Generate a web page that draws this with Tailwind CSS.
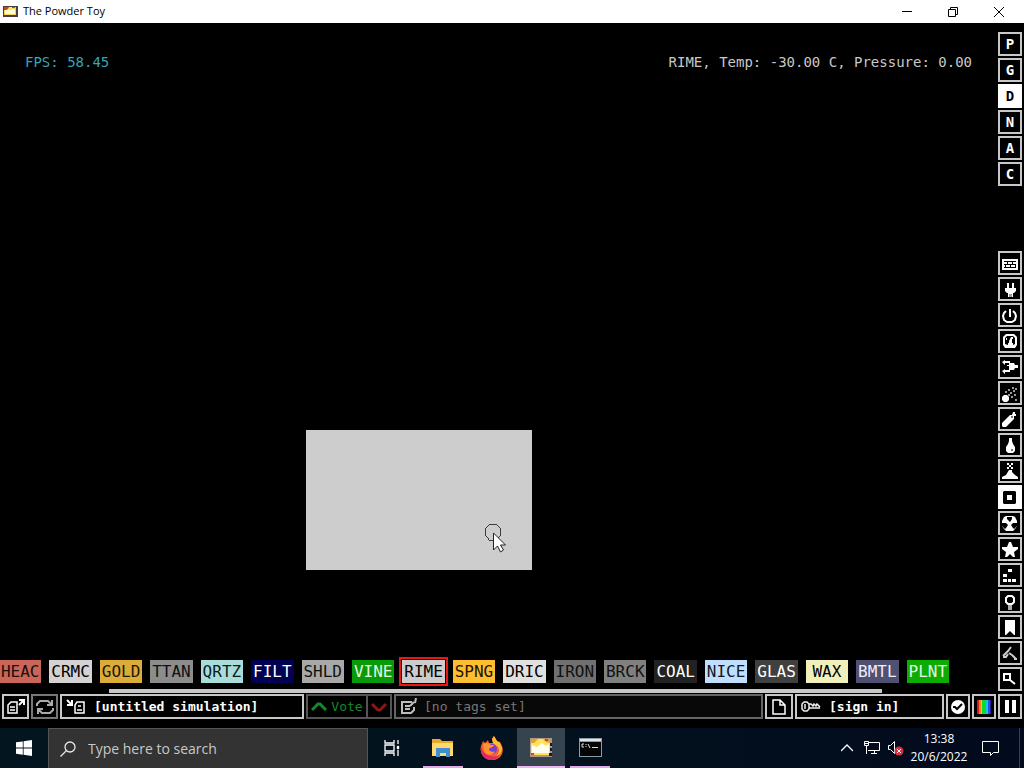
<!DOCTYPE html>
<html lang="en">

<head>
    <meta charset="UTF-8">
    <meta name="viewport" content="width=device-width, initial-scale=1.0">
    <title>The Powder Toy</title>
    <script src="https://cdn.jsdelivr.net/npm/@tailwindcss/browser@4"></script>
</head>

<body class="h-screen flex flex-col overflow-hidden bg-black font-['Open_Sans',sans-serif]">
    <!-- Title bar -->
    <header class="h-[23px] shrink-0 bg-white flex items-center pl-[3px] pr-0.5 text-black">
        <svg class="w-[15px] h-[13px] mr-[5px]" viewBox="0 0 15 13">
            <path fill="#4b3d3d" d="M0 1h15v11H0z" />
            <path fill="#f5d54a" d="M1 2h12v8H1z" />
            <path fill="#fffbe0" d="M2 4h10v5H2z" />
            <path fill="#dd3a22" d="M1 2h5l-2 3H1zM9 2h3v1H9z" />
            <path fill="#ffed42" d="M6 2h3v3H6z" />
        </svg>
        <h1 class="text-[11px] grow">The Powder Toy</h1>
        <button class="w-[46px] h-full grid place-items-center" aria-label="Minimize">
            <svg class="w-3 h-3" viewBox="0 0 12 12" stroke="#000"><path d="M1 5.500h10" /></svg>
        </button>
        <button class="w-[46px] h-full grid place-items-center" aria-label="Restore">
            <svg class="w-3 h-3" viewBox="0 0 12 12" fill="none" stroke="#000"><path d="M1.500 3.500h7v7h-7zM3.500 3V1.500h7v7H9" /></svg>
        </button>
        <button class="w-[46px] h-full grid place-items-center" aria-label="Close">
            <svg class="w-3 h-3" viewBox="0 0 12 12" stroke="#000"><path d="M1 1l10 10M11 1L1 11" /></svg>
        </button>
    </header>

    <main class="grow min-h-0 flex flex-col font-['DejaVu_Sans_Mono',monospace]">
        <div class="grow min-h-0 flex">
            <!-- Simulation -->
            <section class="relative grow min-w-0 flex flex-col pb-px">
                <div class="flex justify-between pl-[25px] pr-[26px] pt-7 text-sm leading-[22px]">
                    <p class="text-[#35a3b8]">FPS: 58.45</p>
                    <p class="text-[#c8c8c8]">RIME, Temp: -30.00 C, Pressure: 0.00</p>
                </div>
                <div class="absolute left-[306px] top-[407px] w-[226px] h-[140px] bg-[#cdcdcd]">
                    <svg class="absolute left-[177px] top-[92px] w-6 h-8" viewBox="0 0 24 32">
                        <path fill="none" stroke="#3c3c3c" d="M6.500 2.500h7l2 2 2 2v7l-2 2-2 3h-7l-2-3-2-2v-7l2-2z" shape-rendering="crispEdges" />
                        <path fill="#fff" stroke="#222" d="M10.500 11v17l4-4 3 6 3-2-3-5h5z" />
                    </svg>
                </div>

                <!-- Element menu -->
                <div id="elements" class="mt-auto -ml-px mr-[49px] grid grid-cols-[repeat(19,minmax(0,1fr))] gap-2"></div>
                <div class="mt-1.5 ml-[109px] mr-[116px] h-1 bg-[#c8c8c8]"></div>
            </section>

            <!-- Side buttons -->
            <aside class="shrink-0 w-[26px] flex flex-col justify-between pt-[9px] pb-[3px]">
                <div id="options" class="flex flex-col gap-0.5"></div>
                <div id="categories" class="flex flex-col gap-0.5"></div>
            </aside>
        </div>

        <!-- Bottom bar -->
        <div class="h-[34px] shrink-0 flex gap-0.5 px-0.5 pb-[9px] text-[13px]">
            <button class="w-[27px] border-2 border-[#c8c8c8] grid place-items-center" aria-label="Open">
                <svg class="w-5 h-[18px]" viewBox="0 0 20 18" fill="none" stroke="#fff" stroke-width="1.500">
                    <path d="M5 4h6v11H2V7zM4 9h5M4 12h5" />
                    <path d="M13 2h5v5M18 2l-5 5" stroke-width="2" />
                </svg>
            </button>
            <button class="w-[27px] border-2 border-[#777] grid place-items-center" aria-label="Reload">
                <svg class="w-5 h-[18px]" viewBox="0 0 20 18" fill="none" stroke="#aaa" stroke-width="2">
                    <path d="M2 8V6l3-3h8l4 4M18 10v2l-3 3H7l-4-4M17 2v5h-5M3 16v-5h5" />
                </svg>
            </button>
            <button class="w-[244px] border-2 border-[#c8c8c8] flex items-center gap-2 pl-1 font-bold text-white text-left">
                <svg class="w-5 h-[18px]" viewBox="0 0 20 18" fill="none" stroke="#fff" stroke-width="1.500">
                    <path d="M11 4h7v11H9V7zM12 8h3M11 12h5" />
                    <path d="M1 2l5 5M6 2v5H1" stroke-width="2" />
                </svg>
                [untitled simulation]
            </button>
            <div class="w-[86px] flex">
                <button class="grow border-2 border-[#555] flex items-center justify-center gap-1 text-[#128a2c]">
                    <svg class="w-4 h-3" viewBox="0 0 16 12" fill="none" stroke="#128a2c" stroke-width="3"><path d="M1 9l6-6h2l6 6" /></svg>
                    Vote
                </button>
                <button class="w-[24px] border-2 border-l-0 border-[#555] grid place-items-center" aria-label="Vote down">
                    <svg class="w-4 h-3" viewBox="0 0 16 12" fill="none" stroke="#8f1512" stroke-width="3"><path d="M1 3l6 6h2l6-6" /></svg>
                </button>
            </div>
            <button class="grow border-2 border-[#666] bg-[#080808] flex items-center gap-1.5 pl-1 text-[#777] text-left">
                <svg class="w-[18px] h-[18px]" viewBox="0 0 18 18" fill="none" stroke="#bdbdbd" stroke-width="2">
                    <path d="M12 4H2v11h9l3-3V9M5 8h5M5 11h5" />
                    <path d="M10 8l4-4M16 0l-1 5" />
                </svg>
                [no tags set]
            </button>
            <button class="w-7 border-2 border-[#c8c8c8] grid place-items-center" aria-label="New simulation">
                <svg class="w-4 h-[18px]" viewBox="0 0 16 18" fill="none" stroke="#fff" stroke-width="1.500"><path d="M2 2h7l5 5v9H2zM9 2v5h5" /></svg>
            </button>
            <button class="w-[149px] border-2 border-[#c8c8c8] flex items-center gap-2 pl-1 font-bold text-white text-left">
                <svg class="w-5 h-3" viewBox="0 0 20 12" fill="none" stroke="#eee" stroke-width="1.500">
                    <path d="M3 1h3l2 2v5l-2 2H3L1 8V3zM4 3v5M8 3h2l2 2 1-2 2 2 1-2 3 3M8 7h11" />
                </svg>
                [sign in]
            </button>
            <button class="w-6 border-2 border-[#c8c8c8] grid place-items-center" aria-label="Simulation options">
                <svg class="w-4 h-4" viewBox="0 0 16 16"><circle cx="8" cy="8" r="7" fill="#fff" /><path d="M3 8h2l2 2 5-5" fill="none" stroke="#000" stroke-width="2" /></svg>
            </button>
            <button class="w-6 border-2 border-[#c8c8c8] grid place-items-center" aria-label="Renderer options">
                <svg class="w-4 h-4" viewBox="0 0 16 16">
                    <path fill="#e01818" d="M1 1h2v14H1z" /><path fill="#f08a10" d="M3 1h2v14H3z" />
                    <path fill="#c8e020" d="M5 1h1v14H5z" /><path fill="#10d830" d="M6 1h4v14H6z" />
                    <path fill="#10c8d8" d="M10 1h2v14h-2z" /><path fill="#1858f0" d="M12 1h2v14h-2z" /><path fill="#301890" d="M14 1h1v14h-1z" />
                </svg>
            </button>
            <button class="w-6 border-2 border-[#c8c8c8] flex items-center justify-center gap-[3px]" aria-label="Pause">
                <span class="w-1 h-[13px] bg-white"></span>
                <span class="w-1 h-[13px] bg-white"></span>
            </button>
        </div>
    </main>

    <!-- Taskbar -->
    <footer class="h-10 shrink-0 flex bg-linear-to-r from-[#031620] via-[#02121e] to-[#020a1d] text-white">
        <button class="w-12 grid place-items-center" aria-label="Start">
            <svg class="w-4 h-4" viewBox="0 0 16 16" fill="#fff"><path d="M0 2.300L6.800 1.400v6.200H0zM7.600 1.300L16 0v7.600H7.600zM0 8.400h6.800v6.300L0 13.700zM7.600 8.400H16V16l-8.400-1.200z" /></svg>
        </button>
        <label class="w-80 flex items-center gap-3 pl-[11px] bg-[#333] border border-[#555] border-b-0">
            <svg class="w-4 h-4" viewBox="0 0 16 16" fill="none" stroke="#e8e8e8" stroke-width="1.300"><circle cx="10" cy="6" r="5" /><path d="M6.500 9.500L.5 15.500" /></svg>
            <input type="text" aria-label="Search" placeholder="Type here to search" class="grow min-w-0 bg-transparent outline-none text-sm placeholder:text-[#c8c8c8]">
        </label>
        <button class="w-12 mr-[3px] grid place-items-center" aria-label="Task view">
            <svg class="w-[18px] h-4" viewBox="0 0 18 16" fill="none" stroke="#fff" stroke-width="1.300"><path d="M2 0v3h9V0M2 16v-3h9v3M2 5h9v6H2zM15 0v4M15 10v6" /><path d="M14.500 6.500h1v2h-1z" /></svg>
        </button>
        <nav class="flex gap-px">
            <button class="w-12 flex flex-col items-center justify-between" aria-label="File Explorer">
                <svg class="w-6 h-5 mt-2.5" viewBox="0 0 24 20">
                    <path fill="#e9a92a" d="M1 1h8l2 2h11v5H1z" /><path fill="#ffd96e" d="M1 5h21v13H1z" />
                    <path fill="#3f8fd0" d="M5 10h14v9h-4v-4H9v4H5z" />
                </svg>
                <span class="w-10 h-0.5 bg-[#e2a9ea]"></span>
            </button>
            <button class="w-12 grid place-items-center" aria-label="Firefox">
                <svg class="w-6 h-6" viewBox="0 0 24 24">
                    <path fill="#ff5a2c" d="M3 5l2 2 3-3 1 3h4L12 3l2-3 3 5 3 1 2 4c3 8-3 14-10 14S-1 18 1 10z" />
                    <path fill="#ffbd2e" d="M14 0l3 5 3 2 2 5c0 5-3 8-7 9 4-3 5-7 3-10l-5-4-1-4z" />
                    <path fill="#e22b63" d="M1 11c2 5 5 8 10 9 4 1 7 0 9-2-2 4-5 6-9 6C4 24 0 18 1 11z" />
                    <circle cx="12" cy="13" r="5" fill="#7542c9" />
                    <path fill="#ff922d" d="M3 8c3-2 6-1 8 1h3c-1 3-4 2-5 4 0 2 3 4 6 2-2 5-9 5-11 0z" />
                </svg>
            </button>
            <button class="w-12 bg-[#35444e] flex flex-col items-center justify-between" aria-label="The Powder Toy">
                <svg class="w-6 h-5 mt-2.5" viewBox="0 0 24 20">
                    <path fill="#aa9784" d="M1 0h22v19H1z" /><path fill="#ffe45a" d="M2 1h19v16H2z" />
                    <path fill="#fffdf0" d="M3 7l5 2 5-4 4 3 3-2v9H3z" />
                    <path fill="#ee9b28" d="M2 1h7L5 5H2zM14 1h7v4l-4-1z" /><path fill="#de4024" d="M2 15h3v2H2zM16 1h3v2h-3z" />
                    <path fill="#201a1a" d="M21 5h2v3h-2zM21 10h2v3h-2zM20 15h3v3h-3z" />
                </svg>
                <span class="w-full h-0.5 bg-[#efb6f3]"></span>
            </button>
            <button class="w-12 flex flex-col items-center justify-between" aria-label="Command Prompt">
                <svg class="w-[23px] h-5 mt-2.5" viewBox="0 0 23 20">
                    <path fill="#8f9ba0" d="M0 0h23v19H0z" /><path fill="#e1e6e8" d="M1 1h21v2H1z" /><path fill="#050505" d="M1 4h21v14H1z" />
                    <path fill="none" stroke="#ddd" d="M5 6H3v3h2M7 6v1M7 8v1M9 6l2 4M13 9.500h6" />
                </svg>
                <span class="w-10 h-0.5 bg-[#e2a9ea]"></span>
            </button>
        </nav>
        <div class="ml-auto flex items-center pr-1">
            <button class="w-6 grid place-items-center" aria-label="Show hidden icons">
                <svg class="w-3 h-3" viewBox="0 0 12 12" fill="none" stroke="#fff" stroke-width="1.300"><path d="M0 9l6-6 6 6" /></svg>
            </button>
            <button class="w-6 grid place-items-center" aria-label="Network">
                <svg class="w-[17px] h-4" viewBox="0 0 17 16" fill="none" stroke="#fff"><path d="M6 2.500h10.500v8H5M1.500 1.500h4v4h-4zM3.500 6v8M8 13.500h6M11.500 11v2M2 3.500h3" /></svg>
            </button>
            <button class="w-6 grid place-items-center" aria-label="Volume">
                <svg class="w-[17px] h-4" viewBox="0 0 17 16"><path d="M1.500 5.500h2l4-4v12l-4-4h-2z" fill="none" stroke="#fff" /><circle cx="12" cy="11" r="4.500" fill="#d5303c" /><path d="M10 9l4 4M14 9l-4 4" stroke="#fff" /></svg>
            </button>
            <time class="w-16 text-center text-xs leading-[18px]">13:38<br>20/6/2022</time>
            <button class="w-[38px] grid place-items-center" aria-label="Notifications">
                <svg class="w-[17px] h-[17px]" viewBox="0 0 17 17" fill="none" stroke="#fff"><path d="M.5 1.500h16v11h-5l-3 3v-3h-8z" /></svg>
            </button>
            <span class="ml-2.5 w-px h-10 bg-[#33415a]"></span>
        </div>
    </footer>

    <script>
        const elements = [
            ['HEAC', 'bg-[#c96659] text-[#1c0e0c]'],
            ['CRMC', 'bg-[#d5d2d3] text-black'],
            ['GOLD', 'bg-[#dcac38] text-[#1d1605]'],
            ['TTAN', 'bg-[#8c8c8c] text-[#101010]'],
            ['QRTZ', 'bg-[#a9dddb] text-[#0c1c1c]'],
            ['FILT', 'bg-[#020050] text-white'],
            ['SHLD', 'bg-[#a8a8a8] text-[#101010]'],
            ['VINE', 'bg-[#089b08] text-[#e4f5e4]'],
            ['RIME', 'bg-[#cccccc] text-black ring-2 ring-[#e81818] ring-offset-1 ring-offset-black'],
            ['SPNG', 'bg-[#ffbe30] text-[#1c1404]'],
            ['DRIC', 'bg-[#e0e0e0] text-black'],
            ['IRON', 'bg-[#707070] text-[#101010]'],
            ['BRCK', 'bg-[#808080] text-[#101010]'],
            ['COAL', 'bg-[#222222] text-white'],
            ['NICE', 'bg-[#c0dfff] text-[#101824]'],
            ['GLAS', 'bg-[#404040] text-white'],
            ['WAX', 'bg-[#f0f0bb] text-black'],
            ['BMTL', 'bg-[#505070] text-[#eeeeff]'],
            ['PLNT', 'bg-[#0cac00] text-[#e4f5e4]'],
        ];

        const options = ['P', 'G', 'D', 'N', 'A', 'C'];

        const categories = [
            ['Walls', '<path d="M5 6h16v11H5z"/><path stroke="#000" d="M7 8.500h12M7 11.500h12M7 14.500h12M10.500 9v2M15.500 9v2M8.500 12v2M13.500 12v2M18.500 12v2"/>'],
            ['Electronics', '<path d="M10 4h2v5h-2zM15 4h2v5h-2zM8 9h11v3l-2 2h-1v4h-5v-4h-1l-2-2z"/><path fill="#999" d="M12 15h3v3h-3z"/>'],
            ['Powered', '<path d="M12 4h2v8h-2z"/><path d="M9 6L7 8l-1 3 1 4 3 2h5l3-2 1-4-1-3-2-2" fill="none" stroke="#fff" stroke-width="2"/>'],
            ['Sensors', '<path d="M9 3h8l3 3v8l-2 3H8l-2-3V6z"/><path fill="#000" d="M10 5h6l2 2v6l-2 1v-2h-5v2l-3-1V7z"/><path d="M14 6h2v2h-1v4h-3v-2l1-2zM9 7h1v2H9z"/>'],
            ['Force', '<path d="M5 5l3-2v1h5v2H8v2zM5 14l3-2v1h5v2H8v2z"/><path d="M12 6h5l1 2h3v3h-3l-1 2h-5V9h-2V8h2z"/>'],
            ['Explosives', '<path d="M7 12h3l2 2v3l-2 2H7l-2-2v-3z"/><path fill="#999" d="M8 8h2v2H8zM11 6h2v2h-2zM13 9h2v2h-2zM16 7h2v2h-2zM11 11h2v2h-2zM15 4h2v2h-2zM18 5h2v2h-2zM14 13h2v2h-2zM17 11h2v2h-2zM18 16h2v2h-2z"/>'],
            ['Gases', '<path d="M16 3h2v2h1v2h-2v3l-8 8H6l-1-1v-3l8-8h2z"/><path fill="#777" d="M14 7h2v2h-2z"/>'],
            ['Liquids', '<path d="M12 3h3v3l1 3 2 3v4l-2 2h-5l-2-2v-4l2-3 1-3z"/><path fill="#777" d="M14 14h2v2h-2z"/>'],
            ['Powders', '<path d="M12 9h3v2l3 3 3 2v2H5v-2l4-2z"/><path d="M10 2h2v2h-2zM14 2h2v2h-2zM12 4h2v2h-2zM10 6h2v2h-2zM14 6h2v2h-2z"/>'],
            ['Solids', '<path fill="#000" d="M7 4h11l1 1v11l-1 1H7l-1-1V5z"/><path d="M10 8h5v5h-5z"/>'],
            ['Radioactive', '<path d="M9 3h7l2 1 2 4v5l-2 3-2 2H9l-2-2-2-3V8l2-4z"/><path fill="#000" d="M10 4h5v2l-2 3-3-3zM5 10h4l2 2-2 3-1 1-3-3zM20 10h-4l-2 2 2 3 1 1 3-3z"/>'],
            ['Special', '<path d="M12 3h2l2 5h5v2l-4 3 1 5h-2l-3-3-3 3H8l1-5-4-3V8h5z"/>'],
            ['Life', '<path d="M11 4h4v3h-4zM6 9h4v3H6zM6 14h4v3H6zM11 14h3v3h-3zM15 14h4v3h-4z"/>'],
            ['Tools', '<path fill="none" stroke="#fff" stroke-width="2" d="M11 5h4l2 2v4l-2 2h-4l-2-2V7z"/><path fill="#aaa" d="M11 14h4v5h-4z"/>'],
            ['Favorites', '<path d="M8 3h10v15h-1l-4-4-4 4H8z"/>'],
            ['Decoration', '<path fill="none" stroke="#ccc" stroke-width="2" d="M6 13l6-6M14 4l-3 4M6 14h3l2-3M12 10l3 2M15 12l4 4M17 16h3"/>'],
            ['Search', '<path fill="none" stroke="#fff" stroke-width="2" d="M7 5h6v6H7zM13 11l5 4"/>'],
        ];

        document.getElementById('elements').innerHTML = elements.map(([name, colors]) => `
            <button class="h-[23px] overflow-hidden text-center text-base leading-[22px] ${colors}">${name}</button>
        `).join('');

        document.getElementById('options').innerHTML = options.map(o => `
            <button class="w-6 h-6 border-2 text-sm leading-5 font-bold ${o === 'D' ? 'border-white bg-white text-black' : 'border-[#c8c8c8] text-white'}">${o}</button>
        `).join('');

        document.getElementById('categories').innerHTML = categories.map(([name, icon]) => `
            <button aria-label="${name}" class="w-6 h-6 border-2 ${name === 'Solids' ? 'border-white bg-white' : 'border-[#c8c8c8]'}">
                <svg class="block w-5 h-5" viewBox="3 0 20 20" fill="#fff">${icon}</svg>
            </button>
        `).join('');
    </script>
</body>

</html>
